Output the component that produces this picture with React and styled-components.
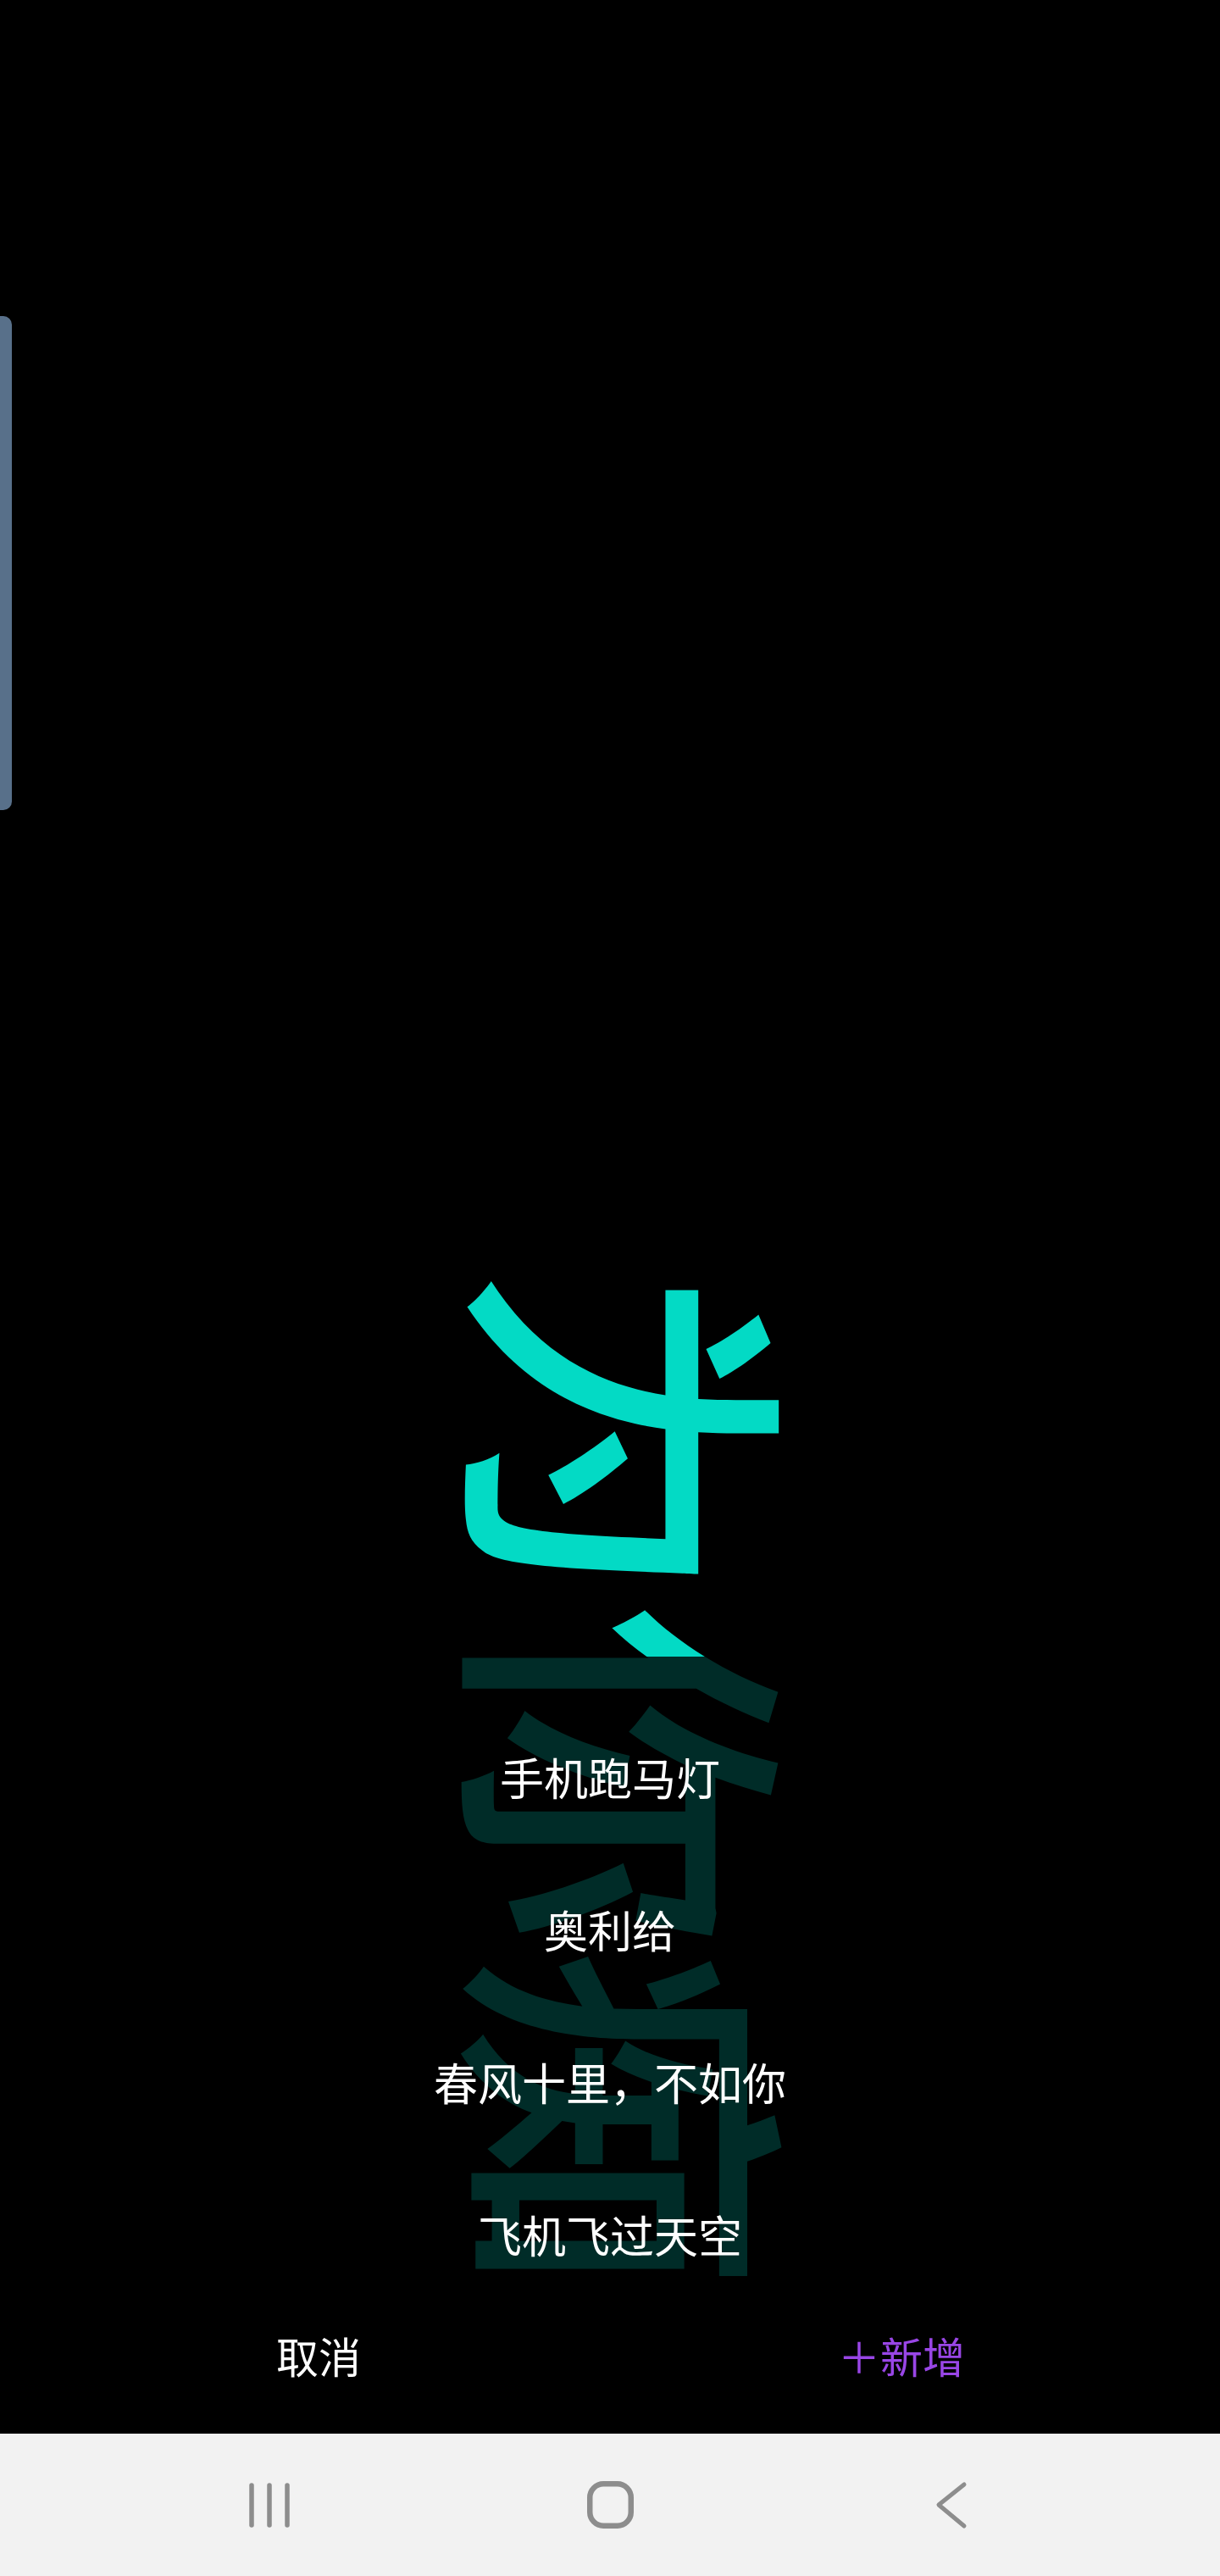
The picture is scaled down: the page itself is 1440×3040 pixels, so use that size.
import React from 'react';
import styled, { createGlobalStyle } from 'styled-components';

const GlobalStyle = createGlobalStyle`
  html, body {
    margin: 0;
    padding: 0;
    background: #000;
  }
  body {
    font-family: 'Noto Sans CJK SC', 'Noto Sans', sans-serif;
  }
`;

const presets = ['手机跑马灯', '奥利给', '春风十里，不如你', '飞机飞过天空'];

const App = () => {
  return (
    <Screen>
      <GlobalStyle />
      <Stage>
        <EdgeHandle />
        <Marquee>为你痴狂</Marquee>
        <Sheet>
          <PresetList>
            {presets.map(text => (
              <PresetItem key={text}>{text}</PresetItem>
            ))}
          </PresetList>
          <SheetFooter>
            <FooterButton>取消</FooterButton>
            <FooterButton $accent>＋新增</FooterButton>
          </SheetFooter>
        </Sheet>
      </Stage>
      <NavBar>
        <NavIcon>
          <svg width="60" height="60" viewBox="0 0 60 60">
            <g stroke="#8d8d8d" strokeWidth="5.5" strokeLinecap="round">
              <line x1="9" y1="7" x2="9" y2="54" />
              <line x1="30" y1="7" x2="30" y2="54" />
              <line x1="51" y1="7" x2="51" y2="54" />
            </g>
          </svg>
        </NavIcon>
        <NavIcon>
          <svg width="60" height="60" viewBox="0 0 60 60">
            <rect
              x="6.25"
              y="5.25"
              width="48.5"
              height="49.5"
              rx="16"
              fill="none"
              stroke="#8d8d8d"
              strokeWidth="6.5"
            />
          </svg>
        </NavIcon>
        <NavIcon>
          <svg width="60" height="60" viewBox="0 0 60 60">
            <polyline
              points="46,6 16,30 46,55"
              fill="none"
              stroke="#8d8d8d"
              strokeWidth="5"
              strokeLinecap="round"
              strokeLinejoin="round"
            />
          </svg>
        </NavIcon>
      </NavBar>
    </Screen>
  );
};

const Screen = styled.div`
  width: 1440px;
  height: 3040px;
  display: flex;
  flex-direction: column;
  background: #000;
  overflow: hidden;
`;

const Stage = styled.div`
  position: relative;
  flex: 1;
  display: flex;
  justify-content: center;
  align-items: flex-start;
  padding-top: 1491px;
  padding-left: 70px;
  box-sizing: border-box;
  overflow: hidden;
  background: #000;
`;

const EdgeHandle = styled.div`
  position: absolute;
  left: 0;
  top: 373px;
  width: 14px;
  height: 583px;
  background: #58708a;
  border-radius: 0 10px 10px 0;
`;

const Marquee = styled.div`
  writing-mode: vertical-rl;
  text-orientation: sideways;
  font-family: 'Noto Sans CJK SC', sans-serif;
  font-size: 404px;
  font-weight: 500;
  line-height: 1;
  color: #03dac5;
  white-space: nowrap;
`;

const Sheet = styled.div`
  position: absolute;
  left: 0;
  right: 0;
  top: 1955px;
  bottom: 0;
  display: flex;
  flex-direction: column;
  background: rgba(0, 0, 0, 0.8);
`;

const PresetList = styled.ul`
  flex: 1;
  margin: 0;
  padding: 112px 0 0;
  list-style: none;
  display: flex;
  flex-direction: column;
  align-items: center;
  gap: 120px;
`;

const PresetItem = styled.li`
  height: 60px;
  line-height: 60px;
  font-size: 52px;
  color: #fff;
  white-space: nowrap;
`;

const SheetFooter = styled.div`
  height: 186px;
  display: flex;
  align-items: center;
  padding: 0 32px;
  background: #000;
`;

const FooterButton = styled.div`
  flex: 1;
  text-align: center;
  font-size: 50px;
  line-height: 60px;
  color: ${p => (p.$accent ? '#9946e6' : '#fff')};
`;

const NavBar = styled.nav`
  height: 168px;
  flex-shrink: 0;
  display: flex;
  justify-content: center;
  align-items: center;
  gap: 342px;
  background: #f2f2f2;
`;

const NavIcon = styled.div`
  width: 60px;
  height: 60px;
  display: flex;
`;

export default App;
